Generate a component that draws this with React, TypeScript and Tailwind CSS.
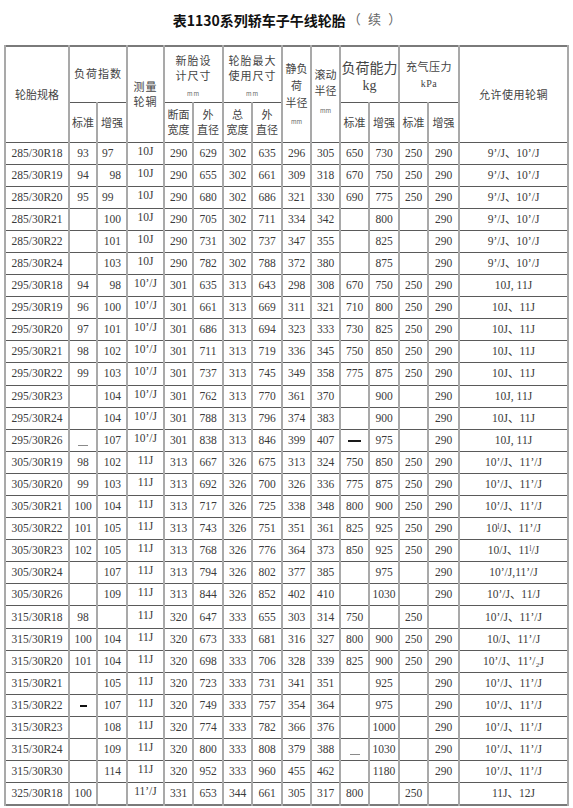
const cols = [64, 28, 30, 37, 29, 30, 29, 30, 29, 29, 29, 30, 29, 31, 109];

const A = "9’/J、10’/J";
const B = "10J、11J";
const C = "10J, 11J";
const D = "10’/J、11’/J";

// ~l light dash, ~d dark em dash, ~b short bold dash
const rows: string[][] = [
  ["285/30R18", "93", "97", "10J", "290", "629", "302", "635", "296", "305", "650", "730", "250", "290", A],
  ["285/30R19", "94", "98", "10J", "290", "655", "302", "661", "309", "318", "670", "750", "250", "290", A],
  ["285/30R20", "95", "99", "10J", "290", "680", "302", "686", "321", "330", "690", "775", "250", "290", A],
  ["285/30R21", "", "100", "10J", "290", "705", "302", "711", "334", "342", "", "800", "", "290", A],
  ["285/30R22", "", "101", "10J", "290", "731", "302", "737", "347", "355", "", "825", "", "290", A],
  ["285/30R24", "", "103", "10J", "290", "782", "302", "788", "372", "380", "", "875", "", "290", A],
  ["295/30R18", "94", "98", "10’/J", "301", "635", "313", "643", "298", "308", "670", "750", "250", "290", C],
  ["295/30R19", "96", "100", "10’/J", "301", "661", "313", "669", "311", "321", "710", "800", "250", "290", B],
  ["295/30R20", "97", "101", "10’/J", "301", "686", "313", "694", "323", "333", "730", "825", "250", "290", B],
  ["295/30R21", "98", "102", "10’/J", "301", "711", "313", "719", "336", "345", "750", "850", "250", "290", B],
  ["295/30R22", "99", "103", "10’/J", "301", "737", "313", "745", "349", "358", "775", "875", "250", "290", B],
  ["295/30R23", "", "104", "10’/J", "301", "762", "313", "770", "361", "370", "", "900", "", "290", C],
  ["295/30R24", "", "104", "10’/J", "301", "788", "313", "796", "374", "383", "", "900", "", "290", B],
  ["295/30R26", "~l", "107", "10’/J", "301", "838", "313", "846", "399", "407", "~d", "975", "", "290", C],
  ["305/30R19", "98", "102", "11J", "313", "667", "326", "675", "313", "324", "750", "850", "250", "290", D],
  ["305/30R20", "99", "103", "11J", "313", "692", "326", "700", "326", "336", "775", "875", "250", "290", D],
  ["305/30R21", "100", "104", "11J", "313", "717", "326", "725", "338", "348", "800", "900", "250", "290", D],
  ["305/30R22", "101", "105", "11J", "313", "743", "326", "751", "351", "361", "825", "925", "250", "290", "10ˡ/J、11’/J"],
  ["305/30R23", "102", "105", "11J", "313", "768", "326", "776", "364", "373", "850", "925", "250", "290", "10/J、11ˡ/J"],
  ["305/30R24", "", "107", "11J", "313", "794", "326", "802", "377", "385", "", "975", "", "290", "10’/J,11’/J"],
  ["305/30R26", "", "109", "11J", "313", "844", "326", "852", "402", "410", "", "1030", "", "290", "10’/J、11/J"],
  ["315/30R18", "98", "", "11J", "320", "647", "333", "655", "303", "314", "750", "", "250", "", D],
  ["315/30R19", "100", "104", "11J", "320", "673", "333", "681", "316", "327", "800", "900", "250", "290", "10/J、11’/J"],
  ["315/30R20", "101", "104", "11J", "320", "698", "333", "706", "328", "339", "825", "900", "250", "290", "10’/J、11’/₂J"],
  ["315/30R21", "", "105", "11J", "320", "723", "333", "731", "341", "351", "", "925", "", "290", D],
  ["315/30R22", "~b", "107", "11J", "320", "749", "333", "757", "354", "364", "", "975", "", "290", D],
  ["315/30R23", "", "108", "11J", "320", "774", "333", "782", "366", "376", "", "1000", "", "290", D],
  ["315/30R24", "", "109", "11J", "320", "800", "333", "808", "379", "388", "~l", "1030", "", "290", D],
  ["315/30R30", "", "114", "11J", "320", "952", "333", "960", "455", "462", "", "1180", "", "290", D],
  ["325/30R18", "100", "", "11’/J", "331", "653", "344", "661", "305", "317", "800", "", "250", "", "11J、12J"],
];

const cellBorder = "border-y border-y-[#5a5a5a] border-x-2 border-x-[#a9a9a9]";

function Value({ v }: { v: string }) {
  if (v === "~l") return <span className="inline-block w-[10px] h-px bg-[#8a8a8a] align-middle translate-y-[4px]" />;
  if (v === "~d") return <span className="inline-block w-[13px] h-[1.5px] bg-[#1a1a1a] align-middle" />;
  if (v === "~b") return <span className="inline-block w-[7px] h-[2px] bg-[#111] align-middle" />;
  return <>{v}</>;
}

function Hd({ children, className = "", ...rest }: React.TdHTMLAttributes<HTMLTableCellElement>) {
  return (
    <td {...rest} className={`${cellBorder} text-center align-middle p-0 ${className}`}>
      {children}
    </td>
  );
}

export default function App() {
  return (
    <div
      className="w-[573px] h-[808px] bg-white overflow-hidden text-[#3a3a3a]"
      style={{ fontFamily: '"Liberation Serif", "Noto Sans CJK SC", serif' }}
    >
      {/* Title */}
      <div className="h-[45px] flex items-center justify-center pb-[5px] pl-[3px]">
        <span
          className="text-[14px] font-bold text-[#111]"
          style={{ fontFamily: '"Noto Sans CJK SC", sans-serif' }}
        >
          表1130系列轿车子午线轮胎
        </span>
        <span className="text-[13px] text-[#666] ml-[2px] tracking-[2px]">（ 续 ）</span>
      </div>

      <table className="ml-[4px] w-[563px] table-fixed border-collapse border-2 border-[#7a7a7a]">
        <colgroup>
          {cols.map((w, i) => (
            <col key={i} style={{ width: w }} />
          ))}
        </colgroup>
        <thead className="text-[11px] text-[#444] leading-[15px]" style={{ fontFamily: '"Noto Sans CJK SC", sans-serif' }}>
          <tr className="h-[56px]">
            <Hd rowSpan={2}>轮胎规格</Hd>
            <Hd colSpan={2} className="tracking-[1px] pb-[2px]">负荷指数</Hd>
            <Hd rowSpan={2} className="tracking-[1px]">
              测量
              <br />
              轮辋
            </Hd>
            <Hd colSpan={2} className="tracking-[1px] pt-[4px]">
              新胎设
              <br />
              计尺寸
              <div className="text-[6px] leading-[12px] mt-[5px] text-[#666]">mm</div>
            </Hd>
            <Hd colSpan={2} className="tracking-[1px] pt-[4px]">
              轮胎最大
              <br />
              使用尺寸
              <div className="text-[6px] leading-[12px] mt-[5px] text-[#666]">mm</div>
            </Hd>
            <Hd rowSpan={2} className="leading-[17px] pt-[4px]">
              静负
              <br />
              荷
              <br />
              半径
              <div className="text-[6px] leading-[22px] text-[#666]">mm</div>
            </Hd>
            <Hd rowSpan={2} className="leading-[16px] pt-[2px]">
              滚动
              <br />
              半径
              <div className="text-[6px] leading-[26px] text-[#666]">mm</div>
            </Hd>
            <Hd colSpan={2} className="text-[14px] leading-[17px] pt-[4px]">
              负荷能力
              <br />
              <span style={{ fontFamily: '"Liberation Serif", serif' }}>kg</span>
            </Hd>
            <Hd colSpan={2} className="leading-[16px] pt-[2px] tracking-[0.5px]">
              充气压力
              <br />
              <span className="text-[10px]" style={{ fontFamily: '"Liberation Serif", serif' }}>kPa</span>
            </Hd>
            <Hd rowSpan={2} className="tracking-[0.5px]">允许使用轮辋</Hd>
          </tr>
          <tr className="h-[40px]">
            <Hd>标准</Hd>
            <Hd>增强</Hd>
            <Hd>
              断面
              <br />
              宽度
            </Hd>
            <Hd>
              外<br />
              直径
            </Hd>
            <Hd>
              总<br />
              宽度
            </Hd>
            <Hd>
              外<br />
              直径
            </Hd>
            <Hd>标准</Hd>
            <Hd>增强</Hd>
            <Hd>标准</Hd>
            <Hd>增强</Hd>
          </tr>
        </thead>
        <tbody className="text-[11.5px] leading-[13px]">
          {rows.map((r, ri) => (
            <tr key={ri} className="h-[22.1px]">
              {r.map((v, ci) => {
                let align = "text-center";
                if (ci === 2 && v) align = ri === 0 || ri === 2 ? "text-left pl-[4px]" : "text-right pr-[5px]";
                const raise = ci === 3 ? "pb-[4px]" : "";
                return (
                  <td key={ci} className={`${cellBorder} ${align} ${raise} align-middle p-0 whitespace-nowrap`}>
                    <Value v={v} />
                  </td>
                );
              })}
            </tr>
          ))}
        </tbody>
      </table>
    </div>
  );
}
